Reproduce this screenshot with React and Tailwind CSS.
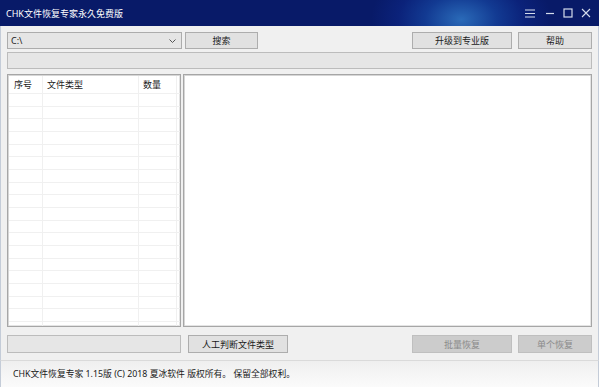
import React from "react";

const font = { fontFamily: "'Noto Sans', 'Noto Sans CJK SC', sans-serif" };

function Btn({ children, className = "", disabled = false }) {
  return (
    <div
      className={`flex items-center justify-center border text-[9px] leading-none ${
        disabled
          ? "border-[#bfbfbf] bg-[#cccccc] text-[#8a8a8a]"
          : "border-[#adadad] bg-[#e1e1e1] text-[#1a1a1a]"
      } ${className}`}
    >
      {children}
    </div>
  );
}

export default function App() {
  const rows = Array.from({ length: 19 });
  return (
    <div
      className="relative flex h-[387px] w-[599px] flex-col overflow-hidden bg-[#f0f0f0] text-[#1a1a1a]"
      style={font}
    >
      {/* Title bar */}
      <div className="flex h-[26px] shrink-0 items-center justify-between bg-[radial-gradient(ellipse_90px_60px_at_77%_75%,#2a6ab8_0%,#123a92_40%,#0b227a_70%,#081a68_100%)] pl-[6px] pr-[8px]">
        <span className="text-[9px] leading-none text-white">CHK文件恢复专家永久免费版</span>
        <div className="flex items-center gap-[8px] text-[#d4dcec]">
          <svg width="11" height="9" viewBox="0 0 11 9" className="mr-[1px]">
            <path d="M0 1h10M0 4.5h10M0 8h10" stroke="currentColor" strokeWidth="1" />
          </svg>
          <svg width="10" height="9" viewBox="0 0 10 9">
            <path d="M1 4.5h8" stroke="currentColor" strokeWidth="1.2" />
          </svg>
          <svg width="10" height="10" viewBox="0 0 10 10">
            <rect x="1" y="1" width="8" height="8" fill="none" stroke="currentColor" strokeWidth="1.2" />
          </svg>
          <svg width="10" height="10" viewBox="0 0 10 10">
            <path d="M1 1l8 8M9 1l-8 8" stroke="currentColor" strokeWidth="1.1" />
          </svg>
        </div>
      </div>

      {/* Body */}
      <div className="flex flex-1 flex-col border-x border-[#c4ccd8] px-[6px] pt-[6px]">
        {/* Top row */}
        <div className="flex h-[17px] shrink-0 items-stretch">
          <div className="relative flex w-[175px] items-center border border-[#acacac] bg-[#e5e5e5] pl-[3px]">
            <span className="text-[9px] leading-none">C:\</span>
            <svg
              width="7"
              height="4"
              viewBox="0 0 7 4"
              className="absolute right-[5px] top-[6px]"
            >
              <path d="M0.5 0.5L3.5 3.5L6.5 0.5" fill="none" stroke="#555" strokeWidth="1" />
            </svg>
          </div>
          <Btn className="ml-[3px] w-[73px]">搜索</Btn>
          <div className="flex-1" />
          <Btn className="w-[100px]">升级到专业版</Btn>
          <Btn className="ml-[6px] w-[74px]">帮助</Btn>
        </div>

        {/* Progress */}
        <div className="mt-[3px] h-[17px] shrink-0 border border-[#bcbcbc] bg-[#e6e6e6]" />

        {/* Panels */}
        <div className="mt-[5px] flex h-[253px] shrink-0 gap-[2px]">
          <div className="flex w-[174px] flex-col overflow-hidden border border-[#a6a6a6] bg-white pl-[1px] pt-[1px] shadow-[inset_1px_1px_0_#d6d6d6,inset_-1px_-1px_0_#e4e4e4]">
            <div className="flex h-[17px] shrink-0 items-center text-[9px] leading-none">
              <div className="flex h-full w-[34px] items-center border-r border-[#f0f0f0] pl-[5px]">序号</div>
              <div className="flex h-full w-[96px] items-center border-r border-[#f0f0f0] pl-[4px]">文件类型</div>
              <div className="flex h-full w-[38px] items-center border-r border-[#f0f0f0] pl-[4px]">数量</div>
            </div>
            {rows.map((_, i) => (
              <div key={i} className="flex h-[12.67px] shrink-0 border-t border-[#f0f0f0]">
                <div className="w-[34px] border-r border-[#f0f0f0]" />
                <div className="w-[96px] border-r border-[#f0f0f0]" />
                <div className="w-[38px] border-r border-[#f0f0f0]" />
              </div>
            ))}
          </div>
          <div className="flex-1 border border-[#a6a6a6] bg-white shadow-[inset_1px_1px_0_#d6d6d6,inset_-1px_-1px_0_#e4e4e4]" />
        </div>

        {/* Bottom row */}
        <div className="mt-[8px] flex h-[18px] shrink-0 items-stretch">
          <div className="w-[174px] border border-[#bcbcbc] bg-[#e6e6e6]" />
          <Btn className="ml-[7px] w-[100px]">人工判断文件类型</Btn>
          <div className="flex-1" />
          <Btn disabled className="w-[100px]">批量恢复</Btn>
          <Btn disabled className="ml-[6px] w-[74px]">单个恢复</Btn>
        </div>

        <div className="flex-1" />
      </div>

      {/* Status bar */}
      <div className="flex h-[27px] shrink-0 items-center border-x border-t border-x-[#c4ccd8] border-t-[#dadada] bg-gradient-to-b from-[#efefef] to-[#fbfbfb] pl-[12px]">
        <span className="text-[8.8px] leading-none text-[#1a1a1a]">
          CHK文件恢复专家 1.15版 (C) 2018 夏冰软件 版权所有。 保留全部权利。
        </span>
      </div>
    </div>
  );
}
